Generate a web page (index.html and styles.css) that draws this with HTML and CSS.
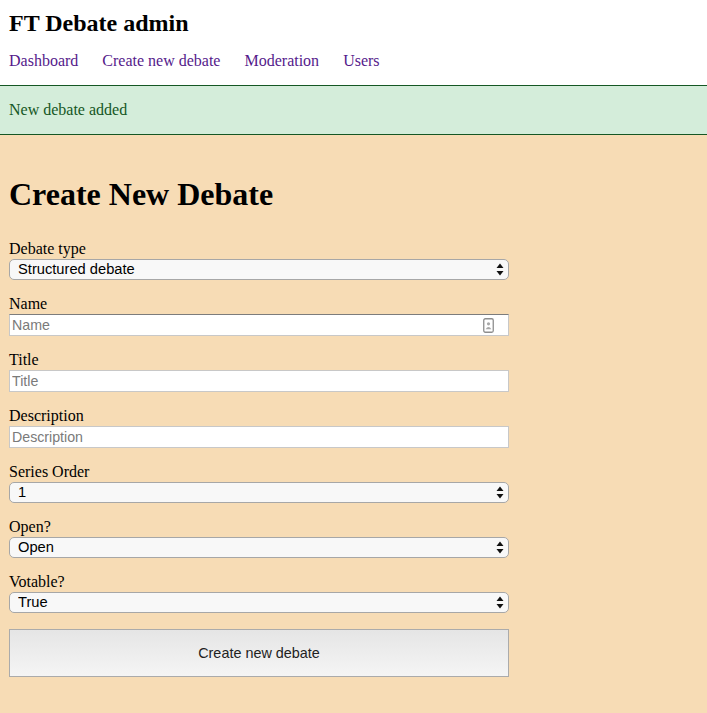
FILE: index.html
```html
<!DOCTYPE html>
<html lang="en">
<head>
<meta charset="utf-8">
<title>FT Debate admin</title>
<link rel="stylesheet" href="styles.css">
</head>
<body>
<header class="site-header">
  <h2 class="site-title">FT Debate admin</h2>
  <nav class="site-nav">
    <a href="#" class="nav-link">Dashboard</a>
    <a href="#" class="nav-link">Create new debate</a>
    <a href="#" class="nav-link">Moderation</a>
    <a href="#" class="nav-link">Users</a>
  </nav>
</header>
<div class="flash">New debate added</div>
<main class="content">
  <h1 class="page-title">Create New Debate</h1>
  <form class="debate-form">
    <div class="field">
      <label class="field-label">Debate type</label>
      <div class="select-wrap">
        <select class="select"><option>Structured debate</option></select>
        <svg class="select-arrow" width="8" height="13" viewBox="0 0 8 13"><path d="M4 0.5 L7.5 5 L0.5 5 Z M0.5 8 L7.5 8 L4 12.5 Z" fill="#111"/></svg>
      </div>
    </div>
    <div class="field">
      <label class="field-label">Name</label>
      <div class="input-wrap">
        <input class="input input-active" type="text" placeholder="Name">
        <svg class="contact-icon" width="11" height="15" viewBox="0 0 11 15"><rect x="0.75" y="0.75" width="9.5" height="13.5" rx="1.5" fill="#fff" stroke="#8e8e8e" stroke-width="1.3"/><circle cx="5.5" cy="5.8" r="1.6" fill="#a8a8a8"/><path d="M2.6 11.2 Q5.5 7 8.4 11.2 Z" fill="#a8a8a8"/></svg>
      </div>
    </div>
    <div class="field">
      <label class="field-label">Title</label>
      <input class="input" type="text" placeholder="Title">
    </div>
    <div class="field">
      <label class="field-label">Description</label>
      <input class="input" type="text" placeholder="Description">
    </div>
    <div class="field">
      <label class="field-label">Series Order</label>
      <div class="select-wrap">
        <select class="select"><option>1</option></select>
        <svg class="select-arrow" width="8" height="13" viewBox="0 0 8 13"><path d="M4 0.5 L7.5 5 L0.5 5 Z M0.5 8 L7.5 8 L4 12.5 Z" fill="#111"/></svg>
      </div>
    </div>
    <div class="field">
      <label class="field-label">Open?</label>
      <div class="select-wrap">
        <select class="select"><option>Open</option></select>
        <svg class="select-arrow" width="8" height="13" viewBox="0 0 8 13"><path d="M4 0.5 L7.5 5 L0.5 5 Z M0.5 8 L7.5 8 L4 12.5 Z" fill="#111"/></svg>
      </div>
    </div>
    <div class="field">
      <label class="field-label">Votable?</label>
      <div class="select-wrap">
        <select class="select"><option>True</option></select>
        <svg class="select-arrow" width="8" height="13" viewBox="0 0 8 13"><path d="M4 0.5 L7.5 5 L0.5 5 Z M0.5 8 L7.5 8 L4 12.5 Z" fill="#111"/></svg>
      </div>
    </div>
    <button type="button" class="submit">Create new debate</button>
  </form>
</main>
</body>
</html>
```
FILE: styles.css
```css
html, body {
  margin: 0;
  padding: 0;
  background: #f7dcb5;
  font-family: "Liberation Serif", "Times New Roman", serif;
  font-size: 16px;
  color: #000;
}

.site-header {
  background: #fff;
  padding: 9px 9px 15px;
}

.site-title {
  margin: 0;
  font-size: 24px;
  line-height: 28px;
  font-weight: bold;
}

.site-nav {
  margin-top: 15px;
  line-height: 18px;
  display: flex;
  gap: 24px;
}

.nav-link {
  color: #551a8b;
  text-decoration: none;
}

.flash {
  background: #d4edda;
  color: #155724;
  border-top: 1px solid #155724;
  border-bottom: 1px solid #155724;
  padding: 15px 9px;
  line-height: 18px;
}

.content {
  padding: 41px 9px 40px;
}

.page-title {
  margin: 0 0 26px;
  font-size: 32px;
  line-height: 37px;
  font-weight: bold;
}

.debate-form {
  width: 500px;
  display: flex;
  flex-direction: column;
}

.field {
  display: flex;
  flex-direction: column;
  margin-bottom: 14px;
}

.field-label {
  line-height: 18px;
  padding-top: 1px;
  margin-bottom: 1px;
}

.select-wrap,
.input-wrap {
  position: relative;
}

.select {
  appearance: none;
  -webkit-appearance: none;
  display: block;
  width: 100%;
  height: 21px;
  margin: 0;
  padding: 0 0 2px 8px;
  box-sizing: border-box;
  border: 1px solid #a7a7a7;
  border-radius: 5px;
  background: #f8f8f8;
  font-family: "Liberation Sans", Arial, sans-serif;
  font-size: 14.7px;
  color: #000;
}

.select-arrow {
  position: absolute;
  right: 5px;
  top: 4px;
  pointer-events: none;
}

.input {
  display: block;
  width: 100%;
  height: 22px;
  margin: 0;
  padding: 0 2px;
  box-sizing: border-box;
  border: 1px solid #c8c8c8;
  background: #fff;
  font-family: "Liberation Sans", Arial, sans-serif;
  font-size: 14.2px;
  color: #000;
  outline: none;
}

.input::placeholder {
  color: #7a7a7a;
}

.input-active {
  border-top-color: #7c7c7c;
}

.contact-icon {
  position: absolute;
  right: 15px;
  top: 4px;
  pointer-events: none;
}

.submit {
  margin-top: 2px;
  width: 500px;
  height: 48px;
  border: 1px solid #ababab;
  border-radius: 0;
  background: linear-gradient(#e5e5e5, #f5f5f5);
  font-family: "Liberation Sans", Arial, sans-serif;
  font-size: 14.4px;
  color: #222;
  padding: 0;
}
```
